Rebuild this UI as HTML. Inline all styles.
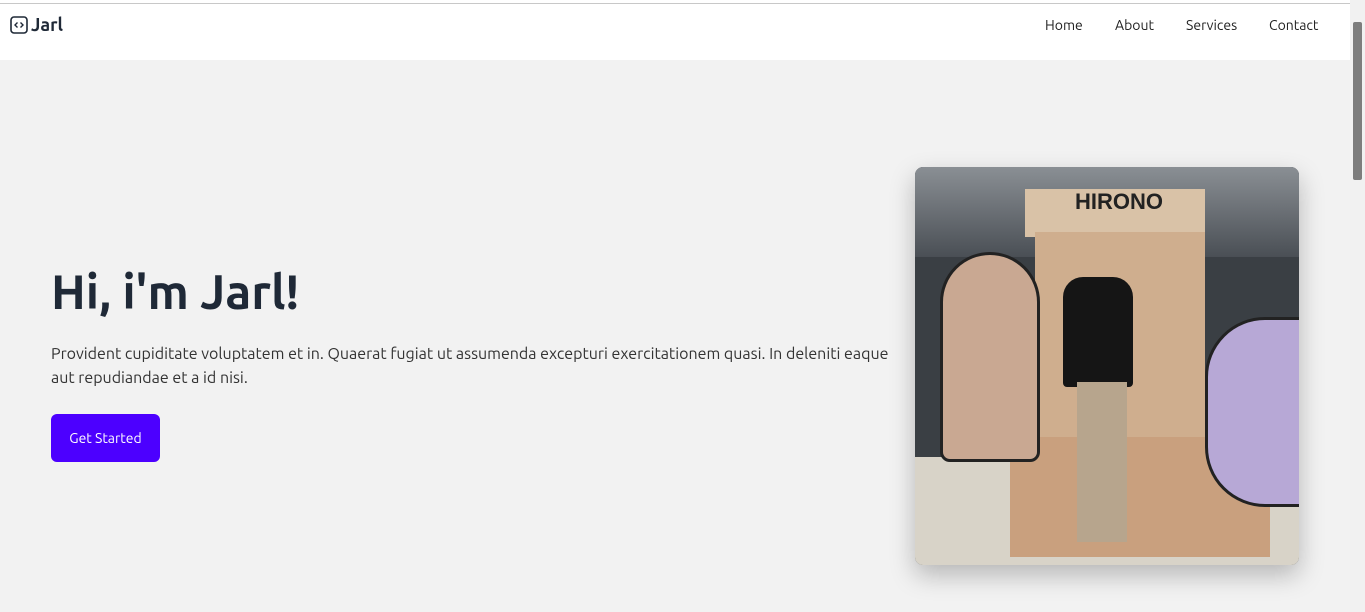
<!DOCTYPE html>
<html><head><style>
*{margin:0;padding:0;box-sizing:border-box}
body{width:1365px;height:612px;overflow:hidden;background:#f2f2f2;font-family:"Ubuntu","Liberation Sans",sans-serif;position:relative}
.top{position:absolute;left:0;top:0;width:1350px;height:4px;background:#fff;border-bottom:1px solid #c8c8c8}
nav{position:absolute;top:4px;left:0;width:1350px;height:56px;background:#fff}
.logo{position:absolute;left:10px;top:11px;display:flex;align-items:center;font-weight:bold;font-size:18px;color:#1f2937}
.logo svg{margin-right:3px}
.links{position:absolute;top:13px;font-size:14px;color:#222}
.links span{position:absolute;white-space:nowrap}
h1{position:absolute;left:51px;top:265px;font-size:48px;font-weight:bold;color:#1f2937;letter-spacing:0px}
p{position:absolute;left:51px;top:342px;width:850px;font-size:16px;line-height:24px;color:#333}
.btn{position:absolute;left:51px;top:414px;width:109px;height:48px;background:#4c00ff;color:#fff;border-radius:6px;font-size:14px;display:flex;align-items:center;justify-content:center}
.img{position:absolute;left:915px;top:167px;width:384px;height:398px;border-radius:8px;overflow:hidden;box-shadow:0 10px 25px rgba(0,0,0,.25);background:#3a3f44}
.sb{position:absolute;right:0;top:0;width:15px;height:612px;background:#f1f1f1}
.sb div{position:absolute;left:3px;top:22px;width:9px;height:158px;background:#7d7d7d;border-radius:2px}
</style></head><body>
<div class="top"></div>
<nav>
<div class="logo"><svg width="18" height="18" viewBox="0 0 18 18"><rect x="1" y="1" width="16" height="16" rx="3" fill="none" stroke="#1f2937" stroke-width="1.6"/><path d="M7.5 6.5L5 9l2.5 2.5M10.5 6.5L13 9l-2.5 2.5" fill="none" stroke="#1f2937" stroke-width="1.4"/></svg>Jarl</div>
<div class="links"><span style="left:1045px">Home</span><span style="left:1115px">About</span><span style="left:1186px">Services</span><span style="left:1269px">Contact</span></div>
</nav>
<h1>Hi, i'm Jarl!</h1>
<p>Provident cupiditate voluptatem et in. Quaerat fugiat ut assumenda excepturi exercitationem quasi. In deleniti eaque aut repudiandae et a id nisi.</p>
<div class="btn">Get Started</div>
<div class="img">
<div style="position:absolute;left:0;top:0;width:384px;height:90px;background:linear-gradient(#8a8f94,#4a4f55)"></div>
<div style="position:absolute;left:110px;top:22px;width:180px;height:48px;background:#d9c2a7"></div>
<div style="position:absolute;left:120px;top:65px;width:170px;height:230px;background:#cfae8e"></div>
<div style="position:absolute;left:0;top:290px;width:384px;height:108px;background:#d8d3c8"></div>
<div style="position:absolute;left:95px;top:270px;width:260px;height:120px;background:#c9a07e"></div>
<div style="position:absolute;left:25px;top:85px;width:100px;height:210px;background:#c9a892;border:3px solid #222;border-radius:50px 50px 10px 10px"></div>
<div style="position:absolute;left:290px;top:150px;width:100px;height:190px;background:#b7a8d6;border:3px solid #222;border-radius:60px 0 0 60px"></div>
<div style="position:absolute;left:148px;top:110px;width:70px;height:110px;background:#151515;border-radius:20px 20px 4px 4px"></div>
<div style="position:absolute;left:162px;top:215px;width:50px;height:160px;background:#b7a58d"></div>
<div style="position:absolute;left:160px;top:22px;font:bold 22px 'Liberation Sans';color:#222">HIRONO</div>
</div>
<div class="sb"><div></div></div>
</body></html>
